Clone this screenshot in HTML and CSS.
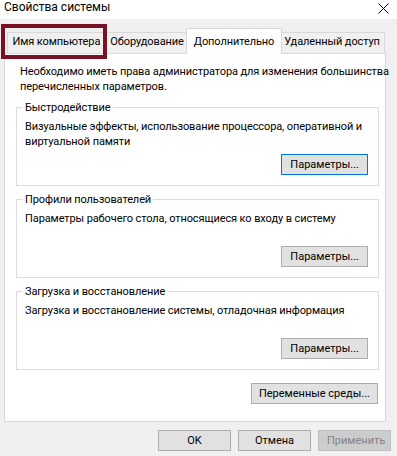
FILE: index.html
```html
<!DOCTYPE html>
<html lang="ru">
<head>
<meta charset="utf-8">
<title>Свойства системы</title>
<link rel="stylesheet" href="styles.css">
</head>
<body>
<div class="window">
  <header class="titlebar">
    <span class="title">Свойства системы</span>
    <svg class="close" width="11" height="11" viewBox="0 0 11 11" aria-label="Закрыть"><path d="M0.5 0.5L10.5 10.5M10.5 0.5L0.5 10.5" stroke="#000" stroke-width="1" fill="none"/></svg>
  </header>
  <div class="tabs">
    <div class="tab">Имя компьютера</div>
    <div class="tab">Оборудование</div>
    <div class="tab active">Дополнительно</div>
    <div class="tab">Удаленный доступ</div>
    <div class="highlight"></div>
  </div>
  <section class="panel">
    <p class="intro">Необходимо иметь права администратора для изменения большинства<br>перечисленных параметров.</p>
    <fieldset class="group">
      <legend>Быстродействие</legend>
      <p class="desc">Визуальные эффекты, использование процессора, оперативной и<br>виртуальной памяти</p>
      <button class="btn btn-default">Параметры...</button>
    </fieldset>
    <fieldset class="group">
      <legend>Профили пользователей</legend>
      <p class="desc">Параметры рабочего стола, относящиеся ко входу в систему</p>
      <button class="btn">Параметры...</button>
    </fieldset>
    <fieldset class="group">
      <legend>Загрузка и восстановление</legend>
      <p class="desc">Загрузка и восстановление системы, отладочная информация</p>
      <button class="btn">Параметры...</button>
    </fieldset>
    <button class="btn btn-env">Переменные среды...</button>
  </section>
  <footer class="actions">
    <button class="btn">OK</button>
    <button class="btn">Отмена</button>
    <button class="btn" disabled>Применить</button>
  </footer>
</div>
</body>
</html>
```

FILE: styles.css
```css
* { box-sizing: border-box; }
html, body { margin: 0; }
body {
  background: #f0f0f0;
  font-family: Roboto, "Liberation Sans", sans-serif;
  font-size: 11px;
  line-height: 15px;
  letter-spacing: -0.1px;
  color: #000;
  width: 397px;
  height: 456px;
  overflow: hidden;
}
.titlebar {
  height: 19px;
  background: #fff;
  display: flex;
  justify-content: space-between;
  padding: 0 8px 0 4px;
}
.title { font-size: 12px; letter-spacing: 0; }
.close { margin-top: 3px; }
.tabs {
  position: relative;
  display: flex;
  align-items: flex-end;
  height: 25px;
  margin-top: 9px;
  padding-left: 7px;
}
.tab {
  height: 21px;
  border: 1px solid #d9d9d9;
  border-bottom: 0;
  background: #f0f0f0;
  line-height: 18px;
  padding: 0 4.5px;
  margin-left: -1px;
  white-space: nowrap;
}
.tab:first-child { margin-left: 0; }
.tab.active {
  height: 26px;
  background: #fff;
  padding: 4px 6.5px 0;
  margin: 0 -2px -1px -3px;
  position: relative;
  z-index: 1;
}
.highlight {
  position: absolute;
  left: 1px;
  top: -4px;
  width: 106px;
  height: 35px;
  border: 4px solid #7a1024;
  z-index: 2;
}
.panel {
  margin-left: 4px;
  width: 382px;
  height: 369px;
  border: 1px solid #d9d9d9;
  background: #fff;
  padding: 10px 6px 0 11px;
  display: flex;
  flex-direction: column;
}
.intro { margin: 0 0 0 4px; white-space: nowrap; }
.group {
  margin: 6px 0 0;
  min-width: 0;
  border: 1px solid #dcdcdc;
  padding: 4px 10px 10px 8px;
  display: flex;
  flex-direction: column;
}
.group legend {
  padding: 0 2px;
  margin-left: -2px;
  line-height: 15px;
}
.desc {
  margin: 0;
  min-height: 35px;
  white-space: nowrap;
}
.btn {
  font: inherit;
  color: #000;
  height: 21px;
  min-width: 80px;
  padding: 0 8px;
  background: #e1e1e1;
  border: 1px solid #adadad;
  border-radius: 0;
  line-height: 18px;
  align-self: flex-end;
}
.btn-default { border-color: #0078d7; }
.btn-env { margin: 13px 1px 0 0; padding: 0 7px; }
.btn:disabled {
  background: #cccccc;
  border-color: #bfbfbf;
  color: #838383;
}
.actions {
  display: flex;
  justify-content: flex-end;
  gap: 7px;
  margin-top: 8px;
  padding-right: 6px;
}
.actions .btn { width: 73px; min-width: 0; }
```
